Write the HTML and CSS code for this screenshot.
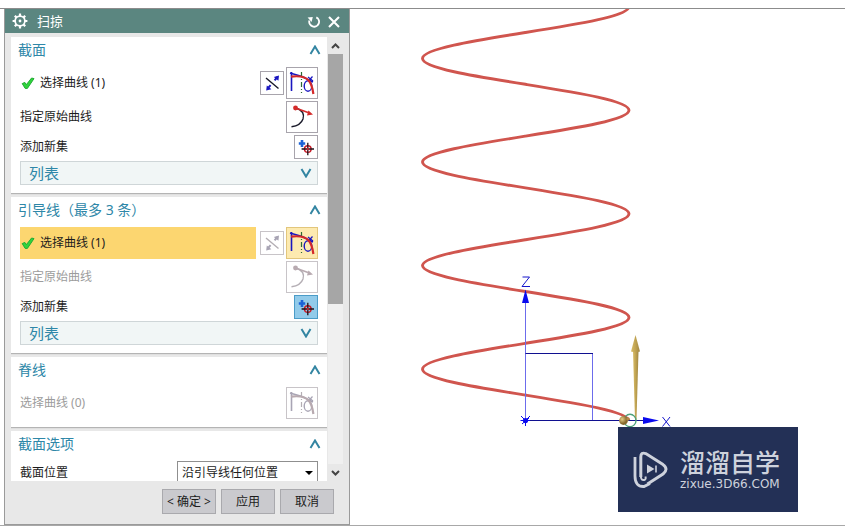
FILE: index.html
```html
<!DOCTYPE html>
<html lang="zh-CN">
<head>
<meta charset="utf-8">
<title>扫掠</title>
<link rel="stylesheet" href="styles.css">
</head>
<body>
<svg class="defs" aria-hidden="true">
  <symbol id="check" viewBox="0 0 14 14"><path d="M1.2 7.6 3.8 6.4 5.4 8.6 10.6 2 13 2.6 6.4 12.4 4.2 12.4Z" fill="#2fd43c" stroke="#22ac34" stroke-width="1"/></symbol>
  <symbol id="chev-up" viewBox="0 0 12 10"><path d="M1.5 9 6 1.5 10.5 9" fill="none" stroke="currentColor" stroke-width="2"/></symbol>
  <symbol id="chev-down" viewBox="0 0 12 10"><path d="M1.5 1 6 8.5 10.5 1" fill="none" stroke="currentColor" stroke-width="2"/></symbol>
  <symbol id="reverse" viewBox="0 0 22 22">
    <path class="k" d="M5 6 17.5 16.5" stroke-width="1.4"/>
    <path class="b" d="M7 16.2 9.6 13.2M13.6 8.4 16.4 5" stroke-width="2"/>
    <path class="bf" d="M18 3.5 17.4 8.8 12.8 5ZM5.2 18.6 5.8 13.4 10.4 17.2Z"/>
  </symbol>
  <symbol id="curve" viewBox="0 0 30 30">
    <path class="b" d="M4.5 4V23" stroke-width="1.6"/>
    <path class="b" d="M3 5 15 8.5 26 14" stroke-width="1.4"/>
    <path class="g" d="M14.5 4V25" stroke-width="1.2" stroke-dasharray="5 2 1 2"/>
    <ellipse class="b" cx="21" cy="18" rx="3.8" ry="5.2" stroke-width="1.4"/>
    <path class="b" d="M21 9 26 13M25.5 8.5 21.5 13" stroke-width="1.2"/>
    <path class="r" d="M4 8.6C12 7.6 18 8.6 21.5 12.2 24.5 15.5 25.5 19.5 26.4 26" stroke-width="2.2"/>
  </symbol>
  <symbol id="origin" viewBox="0 0 30 30">
    <path class="k" d="M9 6C15 8 17.5 12 16 17 14.6 21 10 24 4.5 24.8" stroke-width="1.4"/>
    <path class="r" d="M8.5 6 21 10.5" stroke-width="1.7"/>
    <circle class="rf" cx="8.5" cy="6" r="2.4"/>
    <path class="rf" d="M26 12.6 20 13.4 21.4 8.6Z"/>
  </symbol>
  <symbol id="addset" viewBox="0 0 22 22">
    <path d="M7 4V11M3.8 7.5H10.2" fill="none" stroke="#1c63d6" stroke-width="2.6"/>
    <circle cx="12.8" cy="13" r="3.3" fill="none" stroke="#c8202c" stroke-width="1.5"/>
    <path d="M12.8 6.8V19.2M6.6 13H19" fill="none" stroke="#201018" stroke-width="1.3"/>
    <circle cx="12.8" cy="13" r="1.2" fill="#c8202c"/>
  </symbol>
</svg>

<main class="app">
  <section class="dialog" aria-label="扫掠">
    <header class="titlebar">
      <svg class="gear" viewBox="0 0 16 16"><circle cx="8" cy="8" r="4.9" fill="none" stroke="#fff" stroke-width="1.8"/><circle cx="8" cy="8" r="1.4" fill="#fff"/><path d="M8 .6V3M8 13V15.4M.6 8H3M13 8H15.4M2.8 2.8 4.4 4.4M11.6 11.6 13.2 13.2M13.2 2.8 11.6 4.4M4.4 11.6 2.8 13.2" stroke="#fff" stroke-width="2.2"/></svg>
      <h1>扫掠</h1>
      <button class="bare" type="button" aria-label="重置"><svg class="tool" viewBox="0 0 14 14"><path d="M9.3 3.4A4.9 4.9 0 1 1 2.4 6.6" fill="none" stroke="#fff" stroke-width="1.9"/><path d="M.6 3.4 5.8 3 4.6 8Z" fill="#fff"/></svg></button>
      <button class="bare" type="button" aria-label="关闭"><svg class="tool" viewBox="0 0 14 14"><path d="M2 3 12 13M12 3 2 13" stroke="#fff" stroke-width="2.1"/></svg></button>
    </header>

    <div class="content">
      <div class="groups">
        <section class="group">
          <h2>截面<svg class="chev"><use href="#chev-up"/></svg></h2>
          <div class="row"><div class="pick"><svg class="check"><use href="#check"/></svg>选择曲线 (1)</div><button class="icon small" type="button" aria-label="反向"><svg><use href="#reverse"/></svg></button><button class="icon" type="button" aria-label="曲线"><svg><use href="#curve"/></svg></button></div>
          <div class="row"><span class="name">指定原始曲线</span><button class="icon" type="button" aria-label="指定原始曲线"><svg><use href="#origin"/></svg></button></div>
          <div class="row"><span class="name">添加新集</span><button class="icon small" type="button" aria-label="添加新集"><svg><use href="#addset"/></svg></button></div>
          <button class="list" type="button">列表<svg class="chev"><use href="#chev-down"/></svg></button>
        </section>

        <section class="group">
          <h2><span>引导线<span class="paren" lang="zh-TW">（</span>最多 3 条<span class="paren" lang="zh-TW">）</span></span><svg class="chev"><use href="#chev-up"/></svg></h2>
          <div class="row"><div class="pick active"><svg class="check"><use href="#check"/></svg>选择曲线 (1)</div><button class="icon small" type="button" disabled aria-label="反向"><svg><use href="#reverse"/></svg></button><button class="icon current" type="button" aria-label="曲线"><svg><use href="#curve"/></svg></button></div>
          <div class="row off"><span class="name">指定原始曲线</span><button class="icon" type="button" disabled aria-label="指定原始曲线"><svg><use href="#origin"/></svg></button></div>
          <div class="row"><span class="name">添加新集</span><button class="icon small hot" type="button" aria-label="添加新集"><svg><use href="#addset"/></svg></button></div>
          <button class="list" type="button">列表<svg class="chev"><use href="#chev-down"/></svg></button>
        </section>

        <section class="group">
          <h2>脊线<svg class="chev"><use href="#chev-up"/></svg></h2>
          <div class="row off"><span class="name">选择曲线 (0)</span><button class="icon" type="button" disabled aria-label="曲线"><svg><use href="#curve"/></svg></button></div>
        </section>

        <section class="group">
          <h2>截面选项<svg class="chev"><use href="#chev-up"/></svg></h2>
          <div class="row"><label class="name" for="position">截面位置</label><div class="combo"><select id="position"><option>沿引导线任何位置</option></select><svg class="arrow" viewBox="0 0 8 4"><path d="M0 0H8L4 4Z"/></svg></div></div>
        </section>
      </div>
      <div class="scrollbar" aria-hidden="true">
        <svg class="step" viewBox="0 0 15 17"><path d="M4 11 7.5 7.5 11 11" fill="none" stroke="#444" stroke-width="2"/></svg>
        <div class="track"><div class="thumb"></div></div>
        <svg class="step" viewBox="0 0 15 17"><path d="M4 7 7.5 10.5 11 7" fill="none" stroke="#444" stroke-width="2"/></svg>
      </div>
    </div>

    <footer class="actions">
      <button type="button">&lt; 确定 &gt;</button>
      <button type="button">应用</button>
      <button type="button">取消</button>
    </footer>
  </section>

  <section class="viewport" aria-label="模型视图">
    <svg class="model" viewBox="350 9 495 516" preserveAspectRatio="xMinYMin meet">
      <defs>
        <linearGradient id="gold"><stop offset="0" stop-color="#d9bd68"/><stop offset=".5" stop-color="#c0a352"/><stop offset="1" stop-color="#a08642"/></linearGradient>
        <radialGradient id="ball" cx=".35" cy=".35"><stop offset="0" stop-color="#e6cf88"/><stop offset="1" stop-color="#87692d"/></radialGradient>
      </defs>
      <path d="M629 421c0-9.4-50.5-17.4-103.5-25.9c-53-8.4-103-16.5-103-25.9c0-9.4 50-17.4 103-25.9c53-8.4 103.5-16.5 103.5-25.9c0-9.4-50.5-17.4-103.5-25.9c-53-8.4-103-16.5-103-25.9c0-9.4 50-17.4 103-25.9c53-8.4 103.5-16.5 103.5-25.9c0-9.4-50.5-17.4-103.5-25.9c-53-8.4-103-16.5-103-25.9c0-9.4 50-17.4 103-25.9c53-8.4 103.5-16.5 103.5-25.9c0-9.4-50.5-17.4-103.5-25.9c-53-8.4-103-16.5-103-25.9c0-9.4 50-17.4 103-25.9c53-8.4 103.5-16.5 103.5-25.9" fill="none" stroke="#d0554e" stroke-width="2.9"/>
      <path d="M525.5 420V302M592.5 353V420" stroke="#6c6cec" fill="none"/>
      <path d="M525.5 353.5H593M526 420.5H645" stroke="#101090" fill="none"/>
      <path d="M525.5 289.5 529 303H522ZM659 420.5 643 424V417Z" fill="#0a0aee"/>
      <circle cx="525.5" cy="420.5" r="2.6" fill="#0a0aee"/>
      <path d="M521 416 525.5 420.5 530 416M525.5 420V426M520.5 420.5H530M522 424 529 418" stroke="#0a0aee" fill="none"/>
      <path d="M522.5 277H529.5L522 286.5H530M662.5 417 670 426.5M670 417 662.5 426.5" stroke="#1616cc" stroke-width="1" fill="none" role="img" aria-label="Z X"/>
      <path d="M633 351H638.5L636.5 420H635Z" fill="url(#gold)"/>
      <path d="M635.5 335 640 351.5Q635.5 353 631 351.5Z" fill="url(#gold)"/>
      <ellipse cx="630" cy="420.5" rx="6" ry="6.2" fill="none" stroke="#4da27b" stroke-width="1.4"/>
      <circle cx="623.5" cy="420.5" r="4.4" fill="url(#ball)"/>
      <circle cx="628" cy="419" r="1.8" fill="#b08a47"/>
    </svg>
    <aside class="brand">
      <svg class="logo" viewBox="0 0 36 38" fill="none" stroke="#ced2dc"><path d="M2 6V25Q2 36 11 35.5L17 32.5" stroke-width="2.8"/><path d="M7.8 26V6Q7.8 .8 12.8 2.6L30 13.6Q36 18 30 23L14.5 33" stroke-width="3"/><path d="M7.8 25Q8 29.8 11.2 29 13.4 28.2 12.4 25.5" stroke-width="2"/><path d="M14 13.5 21.5 18 14 22.5Z" fill="#ced2dc" stroke="none"/><path d="M23 14.5V21.5" stroke-width="1.6"/></svg>
      <div class="words"><strong>溜溜自学</strong><span>zixue.3D66.COM</span></div>
    </aside>
  </section>
</main>
</body>
</html>
```
FILE: styles.css
```css
* { box-sizing: border-box; }

body {
  margin: 0;
  padding-top: 8px;
  height: 100vh;
  background: #fff;
  color: #1c1c1c;
  font: 12px/16px "Noto Sans", "Noto Sans CJK SC", sans-serif;
}

button, select { font: inherit; color: inherit; }
svg { display: block; }
h1, h2 { margin: 0; font-weight: 400; }
.defs { display: none; }

.app {
  display: flex;
  height: 100%;
  padding-left: 4px;
  border-top: 1px solid #8c8c8c;
  border-bottom: 1px solid #a8a8a8;
}

.dialog {
  display: flex;
  flex-direction: column;
  flex: 0 0 346px;
  border: solid #9a9a9a;
  border-width: 0 1px 1px;
  background: #e8e8e8;
}

.titlebar {
  display: flex;
  align-items: center;
  gap: 6px;
  height: 24px;
  flex: none;
  padding: 0 8px 0 7px;
  background: #5b8680;
  color: #fff;
}
.titlebar h1 { flex: 1; padding-left: 3px; font-size: 13px; line-height: 18px; }
.gear { width: 16px; height: 16px; }
.tool { width: 14px; height: 14px; }
.bare { padding: 0; border: 0; background: none; }

.content {
  display: flex;
  flex: 1;
  gap: 1px;
  min-height: 0;
  padding: 4px 6px 0;
}

.groups {
  display: flex;
  flex-direction: column;
  flex: 1;
  gap: 4px;
  overflow: hidden;
}

.group {
  display: flex;
  flex-direction: column;
  flex: none;
  gap: 2px;
  padding: 0 9px 8px;
  background: #fff;
  box-shadow: 0 1px 1px #b4b4b4;
}
.group h2 {
  display: flex;
  align-items: center;
  justify-content: space-between;
  height: 28px;
  margin: 0 -3px 0 -2px;
  padding-bottom: 3px;
  color: #2e87a8;
  font-size: 14px;
}
.paren { font-family: "Noto Sans CJK TC", sans-serif; }
.chev { width: 12px; height: 10px; color: #3385a2; }

.row { display: flex; align-items: center; gap: 2px; }
.name { flex: 1; }
.off { color: #9c9c9c; }

.pick {
  display: flex;
  align-items: center;
  flex: 1;
  gap: 5px;
  height: 32px;
  margin-right: 2px;
  padding-left: 1px;
}
.pick.active { background: #fcd670; }
.check { width: 14px; height: 14px; }

.icon {
  width: 32px;
  height: 32px;
  padding: 0;
  border: 1px solid #a8a4ac;
  background: #fff;
}
.icon svg { width: 100%; height: 100%; }
.icon.small { width: 24px; height: 24px; }
.icon.current { border-color: #e2c67c; background: #fdeab0; }
.icon.hot { border-color: #4b9cc8; background: #92cbea; }
.icon:disabled { border-color: #c8c4c8; }

.icon { --ink: #181828; --blue: #1a16c0; --green: #2c6a34; --red: #d42a2a; }
.icon:disabled { --ink: #b4aeb4; --blue: #a8a4b4; --green: #b4aeb4; --red: #b8aab0; }
.k, .b, .g, .r { fill: none; }
.k { stroke: var(--ink); }
.b { stroke: var(--blue); }
.g { stroke: var(--green); }
.r { stroke: var(--red); }
.bf { fill: var(--blue); }
.rf { fill: var(--red); }

.list {
  display: flex;
  align-items: center;
  justify-content: space-between;
  height: 24px;
  padding: 0 5px 0 8px;
  border: 1px solid #cfd6d8;
  background: #f1f6f6;
  color: #2e87a8;
  font-size: 15px;
}

.combo { position: relative; flex: 0 0 141px; }
.combo select {
  width: 100%;
  height: 24px;
  padding: 0 4px;
  border: 1px solid #8f8f8f;
  border-radius: 0;
  background: #fff;
  appearance: none;
}
.arrow { position: absolute; top: 10px; right: 5px; width: 8px; height: 4px; pointer-events: none; }

.scrollbar { display: flex; flex-direction: column; flex: 0 0 15px; }
.step { height: 17px; flex: none; }
.track { flex: 1; background: #f0f0f0; }
.thumb { height: 61%; background: #a6a6a6; }

.actions {
  display: flex;
  justify-content: flex-end;
  gap: 5px;
  padding: 8px 15px 10px;
}
.actions button {
  width: 54px;
  height: 25px;
  padding: 0;
  border: 1px solid #a9a9ad;
  background: #cacace;
  white-space: nowrap;
}

.viewport { position: relative; flex: 1; min-width: 0; overflow: hidden; }
.model { width: 100%; height: auto; }

.brand {
  position: absolute;
  right: 47px;
  bottom: 13px;
  display: flex;
  align-items: center;
  gap: 11px;
  width: 180px;
  height: 85px;
  padding-left: 15px;
  background: #233056;
  color: #ced2dc;
}
.logo { width: 36px; height: 38px; }
.words { display: flex; flex-direction: column; padding-bottom: 6px; white-space: nowrap; }
.words strong { font: 500 25px/34px "Noto Sans CJK SC", sans-serif; }
.words span { font: 12px/12px "DejaVu Sans", sans-serif; }
```
